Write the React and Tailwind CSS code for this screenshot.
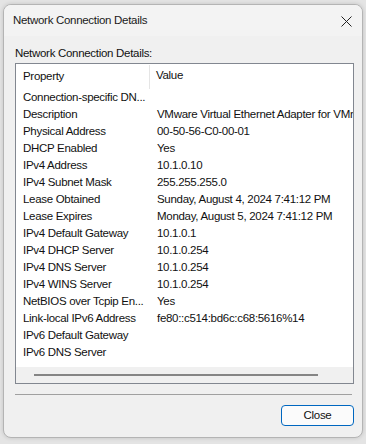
import React from 'react';

const rows = [
    ["Connection-specific DN...", ""],
    ["Description", "VMware Virtual Ethernet Adapter for VMnet1"],
    ["Physical Address", "00-50-56-C0-00-01"],
    ["DHCP Enabled", "Yes"],
    ["IPv4 Address", "10.1.0.10"],
    ["IPv4 Subnet Mask", "255.255.255.0"],
    ["Lease Obtained", "Sunday, August 4, 2024 7:41:12 PM"],
    ["Lease Expires", "Monday, August 5, 2024 7:41:12 PM"],
    ["IPv4 Default Gateway", "10.1.0.1"],
    ["IPv4 DHCP Server", "10.1.0.254"],
    ["IPv4 DNS Server", "10.1.0.254"],
    ["IPv4 WINS Server", "10.1.0.254"],
    ["NetBIOS over Tcpip En...", "Yes"],
    ["Link-local IPv6 Address", "fe80::c514:bd6c:c68:5616%14"],
    ["IPv6 Default Gateway", ""],
    ["IPv6 DNS Server", ""],
];

const App = () => {
    return (
        <div
            className="min-h-screen bg-[#e4e4e4] pt-[4px] pl-[3px] text-[11.5px] tracking-[-0.3px] text-[#111]"
            style={{ fontFamily: '"Segoe UI", "Liberation Sans", Arial, sans-serif' }}
        >
            <div className="w-[360px] h-[434px] rounded-[8px] border border-[#b4b4b4] bg-[#f0f0f0] flex flex-col overflow-hidden shadow-[0_0_4px_rgba(0,0,0,0.15)]">
                {/* title bar */}
                <div className="h-[31px] shrink-0 bg-[#f3f3f3] flex items-center justify-between pl-[9px] pr-[9px] pt-px">
                    <span className="text-[#1a1a1a]">Network Connection Details</span>
                    <svg width="11" height="11" viewBox="0 0 11 11" className="mr-[1px]">
                        <path d="M0.5 0.5 L10.5 10.5 M10.5 0.5 L0.5 10.5" stroke="#222" strokeWidth="1" fill="none" />
                    </svg>
                </div>

                <div className="pl-[11px] pt-[10px]">
                    <div className="leading-[15px] h-[17px]">Network Connection Details:</div>

                    {/* list view */}
                    <div className="w-[339px] h-[321px] border border-[#828790] bg-white flex flex-col">
                        <div className="h-[24px] shrink-0 flex items-center">
                            <div className="w-[134px] pl-[7px] h-full flex items-center border-r border-[#e5e5e5] mt-[2px]">Property</div>
                            <div className="pl-[6px]">Value</div>
                        </div>
                        <div className="flex-1 overflow-hidden pt-px">
                            {rows.map(([k, v], i) => (
                                <div key={i} className="h-[17px] flex items-center whitespace-nowrap">
                                    <div className="w-[134px] shrink-0 pl-[7px] overflow-hidden">{k}</div>
                                    <div className="pl-[7px]">{v}</div>
                                </div>
                            ))}
                        </div>
                        {/* horizontal scrollbar */}
                        <div className="h-[16px] shrink-0 bg-[#f0f0f0] flex items-center pl-[18px]">
                            <div className="w-[284px] h-[2px] bg-[#858585]" />
                        </div>
                    </div>

                    <div className="w-[337px] h-px bg-[#a0a0a0] mt-[10px]" />

                    <div className="flex justify-end w-[339px] mt-[10px]">
                        <button className="w-[73px] h-[21px] rounded-[4px] border border-[#0067c0] bg-[#fbfbfb] leading-none">
                            Close
                        </button>
                    </div>
                </div>
            </div>
        </div>
    );
};

export default App;
